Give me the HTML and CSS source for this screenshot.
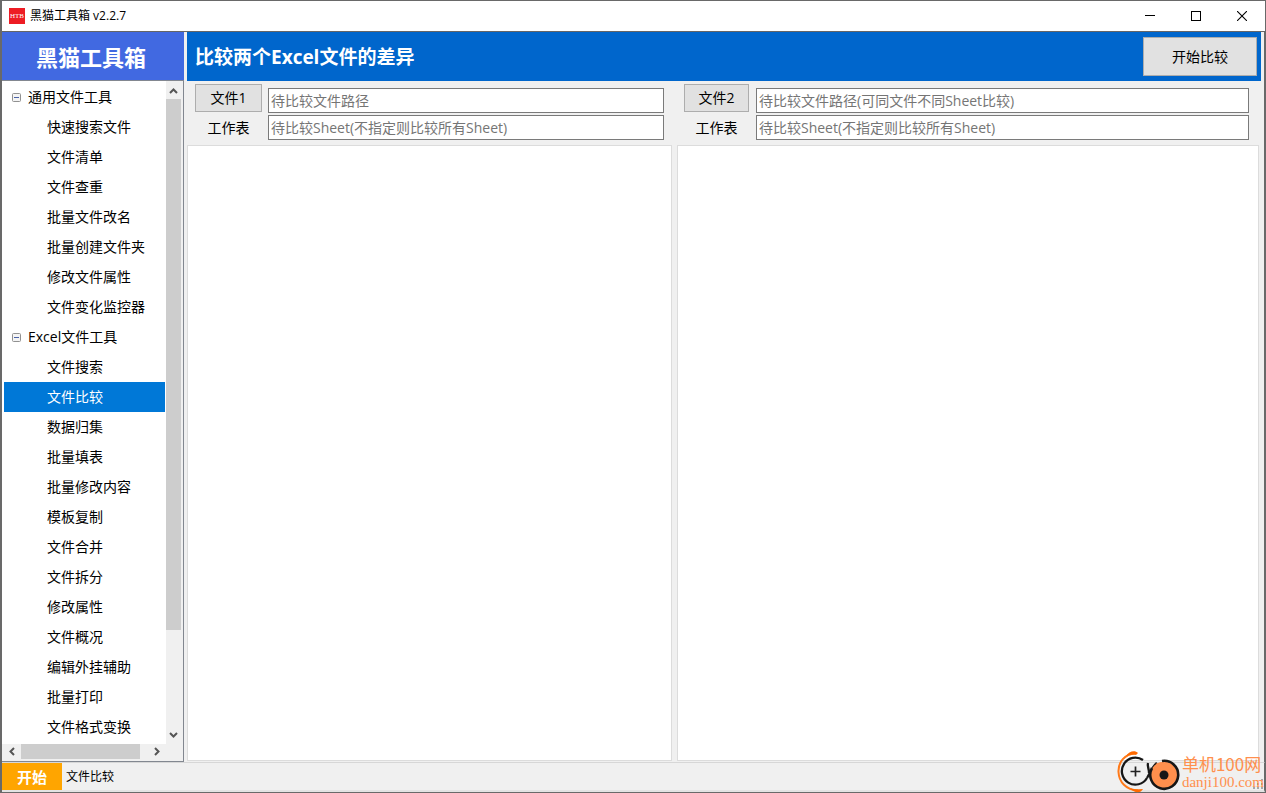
FILE: index.html
```html
<!DOCTYPE html>
<html lang="zh-CN">
<head>
<meta charset="utf-8">
<title>黑猫工具箱 v2.2.7</title>
<link rel="stylesheet" href="styles.css">
</head>
<body>
<div class="window">
  <header class="titlebar">
    <span class="app-icon">HTB</span>
    <span class="app-title">黑猫工具箱 v2.2.7</span>
    <button class="win-btn" aria-label="最小化"><svg width="10" height="10" shape-rendering="crispEdges"><path d="M0 4.500H10" stroke="#000"/></svg></button>
    <button class="win-btn" aria-label="最大化"><svg width="10" height="10" shape-rendering="crispEdges"><path d="M.5 .5H9.5V9.5H.5Z" fill="none" stroke="#000"/></svg></button>
    <button class="win-btn" aria-label="关闭"><svg width="10" height="10"><path d="M0 0L10 10M10 0L0 10" stroke="#000" stroke-width="1.1"/></svg></button>
  </header>
  <div class="body">
    <nav class="sidebar">
      <h1 class="brand">黑猫工具箱</h1>
      <div class="tree">
        <div class="tree-view">
          <ul class="tree-list">
            <li class="group"><svg class="toggle" width="9" height="9"><rect x=".5" y=".5" width="8" height="8" rx="1" fill="#f4f4f4" stroke="#919191"/><path d="M2 4.5H7" stroke="#4b63a7"/></svg>通用文件工具</li>
            <li class="item">快速搜索文件</li>
            <li class="item">文件清单</li>
            <li class="item">文件查重</li>
            <li class="item">批量文件改名</li>
            <li class="item">批量创建文件夹</li>
            <li class="item">修改文件属性</li>
            <li class="item">文件变化监控器</li>
            <li class="group"><svg class="toggle" width="9" height="9"><rect x=".5" y=".5" width="8" height="8" rx="1" fill="#f4f4f4" stroke="#919191"/><path d="M2 4.5H7" stroke="#4b63a7"/></svg>Excel文件工具</li>
            <li class="item">文件搜索</li>
            <li class="item selected">文件比较</li>
            <li class="item">数据归集</li>
            <li class="item">批量填表</li>
            <li class="item">批量修改内容</li>
            <li class="item">模板复制</li>
            <li class="item">文件合并</li>
            <li class="item">文件拆分</li>
            <li class="item">修改属性</li>
            <li class="item">文件概况</li>
            <li class="item">编辑外挂辅助</li>
            <li class="item">批量打印</li>
            <li class="item">文件格式变换</li>
          </ul>
        </div>
        <div class="vbar">
          <svg width="15" height="17"><path d="M4 11L7.500 7.500L11 11" fill="none" stroke="#555" stroke-width="2"/></svg>
          <div class="vtrack"><div class="vthumb"></div></div>
          <svg width="15" height="17"><path d="M4 6L7.500 9.500L11 6" fill="none" stroke="#555" stroke-width="2"/></svg>
        </div>
        <div class="hbar">
          <svg width="17" height="15"><path d="M10 4L6.500 7.500L10 11" fill="none" stroke="#555" stroke-width="2"/></svg>
          <div class="htrack"><div class="hthumb"></div></div>
          <svg width="17" height="15"><path d="M6 4L9.500 7.500L6 11" fill="none" stroke="#555" stroke-width="2"/></svg>
        </div>
      </div>
    </nav>
    <main class="main">
      <div class="main-head">
        <h2 class="main-title">比较两个Excel文件的差异</h2>
        <button class="start-btn">开始比较</button>
      </div>
      <div class="compare">
        <section class="side side-a">
          <div class="form">
            <button class="file-btn">文件1</button>
            <input class="field field-file" type="text" aria-label="文件1路径" placeholder="待比较文件路径">
            <label class="label" for="sheet1">工作表</label>
            <input class="field" id="sheet1" type="text" placeholder="待比较Sheet(不指定则比较所有Sheet)">
          </div>
          <div class="result"></div>
        </section>
        <section class="side side-b">
          <div class="form">
            <button class="file-btn">文件2</button>
            <input class="field field-file" type="text" aria-label="文件2路径" placeholder="待比较文件路径(可同文件不同Sheet比较)">
            <label class="label" for="sheet2">工作表</label>
            <input class="field" id="sheet2" type="text" placeholder="待比较Sheet(不指定则比较所有Sheet)">
          </div>
          <div class="result"></div>
        </section>
      </div>
    </main>
  </div>
  <footer class="status">
    <button class="home-btn">开始</button>
    <span class="status-text">文件比较</span>
    <svg class="grip" width="11" height="11" fill="#a8a8a8"><path d="M8 0h2v2h-2zM4 4h2v2h-2zM8 4h2v2h-2zM0 8h2v2h-2zM4 8h2v2h-2zM8 8h2v2h-2z"/></svg>
  </footer>
</div>
<div class="watermark">
  <svg width="65" height="42" viewBox="0 0 65 42" fill="none">
    <path d="M19 2.500C9 3 2 11 2.500 21C3 31 10 39 22 39.500" stroke="#ff7a1a" stroke-width="2"/>
    <path d="M10 5C13 0 19 -1 22 2L20 4C16 3 13 4 10 5Z" fill="#ff6a00"/>
    <path d="M14 37C17 39 22 38 27 38C25 42 19 43 14 37Z" fill="#ff6a00"/>
    <path d="M27 9A13.500 13.500 0 1 0 31 27" stroke="#171717" stroke-width="2.300"/>
    <path d="M31 27C34 22 36 16 41 12" stroke="#171717" stroke-width="2.300"/>
    <path d="M32 12C31 15 33 17 33 22" stroke="#171717" stroke-width="2.300"/>
    <circle cx="48" cy="24" r="13.500" fill="#ff8f4d"/>
    <path d="M46 10A14 14 0 1 1 36 17" stroke="#171717" stroke-width="2.600"/>
    <circle cx="48" cy="24" r="4.500" fill="#171717"/>
    <path d="M14.500 20.500H24.500M19.500 15.500V25.500" stroke="#222" stroke-width="1.700"/>
  </svg>
  <div class="mark-text"><span class="mark-name">单机100网</span><span class="mark-url">danji100.com</span></div>
</div>
</body>
</html>
```
FILE: styles.css
```css
* { box-sizing: border-box; }

body {
  margin: 0;
  height: 100vh;
  overflow: hidden;
  position: relative;
  background: #666;
  color: #000;
  font: 14px/20px "Open Sans", "Noto Sans CJK SC", sans-serif;
}

button, input {
  font: inherit;
  color: inherit;
  border-radius: 0;
  margin: 0;
}

h1, h2, ul { margin: 0; padding: 0; }

.window {
  height: 100%;
  display: flex;
  flex-direction: column;
  border: solid #696969;
  border-width: 1px 1px 1px 2px;
  background: #f0f0f0;
}

.titlebar {
  flex: none;
  height: 31px;
  display: flex;
  align-items: center;
  padding-left: 7px;
  background: #fff;
  border-bottom: 1px solid #666;
}

.app-icon {
  width: 16px;
  height: 16px;
  background: #ed1c24;
  color: #fff;
  font: 7px/16px "Liberation Serif", serif;
  text-align: center;
}

.app-title {
  flex: 1;
  padding-left: 5px;
  font-size: 12px;
}

.win-btn {
  width: 46px;
  height: 30px;
  padding: 0;
  border: 0;
  background: none;
  display: grid;
  place-items: center;
}

.body {
  flex: 1;
  min-height: 0;
  display: flex;
  gap: 3px;
  border-right: 1px solid #696969;
}

.sidebar {
  flex: none;
  width: 182px;
  display: flex;
  flex-direction: column;
}

.brand {
  flex: none;
  height: 48px;
  padding-right: 4px;
  background: #4169e1;
  color: #fff;
  font-size: 22px;
  line-height: 50px;
  text-align: center;
}

.tree {
  flex: 1;
  min-height: 0;
  display: grid;
  grid-template: minmax(0, 1fr) 15px / minmax(0, 1fr) 15px;
  padding: 1px 2px 2px 1px;
  border: 1px solid #828790;
  border-left: 0;
  background: #f0f0f0;
}

.tree-view {
  overflow: hidden;
  background: #fff;
  margin: -1px 0 0 -1px;
  padding: 1px 1px 0 2px;
}

.tree-list { list-style: none; }

.group, .item {
  height: 30px;
  line-height: 30px;
  white-space: nowrap;
}

.group {
  display: flex;
  align-items: center;
  gap: 7px;
  padding-left: 8px;
}

.item { padding-left: 43px; }

.selected { background: #0078d7; color: #fff; }

.vbar { display: flex; flex-direction: column; }
.vtrack { flex: 1; }
.vthumb { height: 84.5%; background: #cdcdcd; }

.hbar { display: flex; padding-left: 1px; }
.htrack { flex: 1; }
.hthumb { height: 100%; width: 93%; background: #cdcdcd; }

.main {
  flex: 1;
  min-width: 0;
  display: flex;
  flex-direction: column;
  padding-right: 3px;
}

.main-head {
  flex: none;
  height: 49px;
  display: flex;
  align-items: center;
  justify-content: space-between;
  padding: 0 4px 0 8px;
  background: #0066cc;
}

.main-title { color: #fff; font-size: 19px; line-height: 24px; }

.start-btn {
  width: 114px;
  height: 39px;
  padding: 0;
  background: #e1e1e1;
  border: 1px solid #adadad;
}

.compare {
  flex: 1;
  min-height: 0;
  display: flex;
  gap: 5px;
  padding: 3px 2px 1px 0;
}

.side {
  min-width: 0;
  display: flex;
  flex-direction: column;
}

.side-a { flex: 5 1 0; }
.side-b { flex: 6 1 0; }

.form {
  display: grid;
  grid-template-columns: 67px minmax(0, 1fr);
  column-gap: 6px;
  row-gap: 2px;
  align-items: end;
  padding: 0 8px 5px;
}

.side-b .form {
  grid-template-columns: 65px minmax(0, 1fr);
  column-gap: 7px;
  padding: 0 10px 5px 7px;
}

.file-btn {
  height: 28px;
  padding: 0;
  align-self: start;
  background: #e1e1e1;
  border: 1px solid #adadad;
}

.label { line-height: 25px; text-align: center; }

.field {
  width: 100%;
  height: 25px;
  padding: 0 2px;
  background: #fff;
  border: 1px solid #7a7a7a;
}

.field-file { margin-top: 4px; }
.field::placeholder { color: #757575; opacity: 1; }

.result {
  flex: 1;
  background: #fff;
  border: 1px solid #dcdcdc;
}

.status {
  flex: none;
  height: 30px;
  display: flex;
  align-items: center;
  border-top: 1px solid #d7d7d7;
  border-right: 1px solid #696969;
  border-bottom: 2px solid #e3e3e3;
}

.home-btn {
  width: 60px;
  height: 100%;
  padding: 0;
  border: 0;
  background: #ffa500;
  color: #fff;
  font-size: 15px;
  font-weight: bold;
}

.status-text { flex: 1; padding-left: 4px; font-size: 12px; }
.grip { align-self: flex-end; }

.watermark {
  position: absolute;
  right: 2px;
  bottom: 0;
  display: flex;
  align-items: center;
  gap: 1px;
  color: #ff8f4d;
}

.mark-text {
  display: flex;
  flex-direction: column;
  font-family: "Noto Sans CJK SC", sans-serif;
}

.mark-name { font-size: 17px; line-height: 21px; }
.mark-url { font: 15px/17px "Liberation Serif", serif; }
```
